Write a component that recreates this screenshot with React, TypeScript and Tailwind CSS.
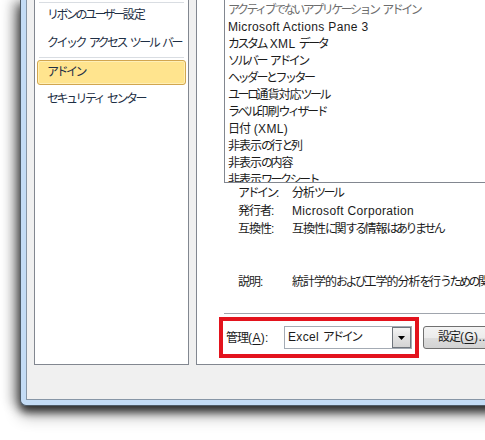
import React from 'react';

// Meiryo UI packs kana tighter than kanji; our CJK font is full width for both,
// so split text into runs and pull each run in by its own amount.
const RUN = /([\u3040-\u30ff]+)|([\u3000-\u303f\u3400-\u9fff\uff00-\uffef]+)|([^\u3000-\u9fff\uff00-\uffef]+)/g;

function T({ s }: { s: string }) {
  const runs: { text: string; cls: string }[] = [];
  for (const m of s.matchAll(RUN)) {
    if (m[1]) runs.push({ text: m[1], cls: 'tracking-[-2.5px]' });
    else if (m[2]) runs.push({ text: m[2], cls: 'tracking-[-1px]' });
    else runs.push({ text: m[3], cls: 'tracking-[0.35px]' });
  }
  return (
    <>
      {runs.map((r, i) => (
        <span key={i} className={r.cls}>
          {r.text}
        </span>
      ))}
    </>
  );
}

const navItems = ['リボンのユーザー設定', 'クイック アクセス ツール バー'];

const addins = [
  'Microsoft Actions Pane 3',
  'カスタム XML データ',
  'ソルバー アドイン',
  'ヘッダーとフッター',
  'ユーロ通貨対応ツール',
  'ラベル印刷ウィザード',
  '日付 (XML)',
  '非表示の行と列',
  '非表示の内容',
  '非表示ワークシート',
];

const details = [
  { label: 'アドイン:', value: '分析ツール' },
  { label: '発行者:', value: 'Microsoft Corporation' },
  { label: '互換性:', value: '互換性に関する情報はありません' },
];

export default function App() {
  return (
    <div className="w-[485px] h-[440px] bg-white overflow-hidden pl-[20px] text-[12px] font-[family-name:'Liberation_Sans','Noto_Sans_CJK_JP',sans-serif]">
      {/* Window frame */}
      <div className="h-[406px] w-[520px] rounded-bl-[6px] border-l border-b border-[#4f5c68] bg-[#c4dcf5] pl-[5px] pb-[5px] shadow-[0_6px_8px_rgba(0,0,0,0.7),0_10px_16px_rgba(0,0,0,0.3),-8px_0_12px_rgba(0,0,0,0.3)]">
        <div className="h-full flex gap-[7px] pl-[7px] pb-[34px] border-l border-b border-[#8796a6] bg-[#f0f0f0]">
          {/* Left navigation */}
          <div className="w-[155px] shrink-0 border-l border-r border-b border-[#828790] bg-white text-[#1e2f45]">
            <div className="mx-[4px] mt-[2px] h-px bg-[#d9dde2]" />
            {navItems.map((item, i) => (
              <div
                key={item}
                className={`h-[24px] leading-[24px] pl-[12px] whitespace-nowrap ${i > 0 ? 'mt-[4px]' : ''}`}
              >
                <T s={item} />
              </div>
            ))}
            <div className="mx-[4px] mt-[2px] h-px bg-[#d9dde2]" />
            <div className="mx-[2px] mt-[2px] h-[25px] leading-[23px] pl-[9px] rounded-[3px] border border-[#d2a64f] bg-[#ffe48e] shadow-[inset_0_0_0_1px_rgba(255,244,200,0.7)]">
              <T s="アドイン" />
            </div>
            <div className="mt-[2px] h-[24px] leading-[24px] pl-[12px] whitespace-nowrap">
              <T s="セキュリティ センター" />
            </div>
          </div>

          {/* Right panel */}
          <div className="flex-1 flex flex-col border-l border-b border-[#828790] bg-white text-[#1b1b1b]">
            {/* Add-in list */}
            <div className="ml-[27px] h-[183px] shrink-0 overflow-hidden border-l border-b border-[#828790] pt-[2px] pl-[3px]">
              <div className="h-[17px] leading-[17px] whitespace-nowrap text-[#6d6d6d]">
                <T s="アクティブでないアプリケーション アドイン" />
              </div>
              {addins.map((a) => (
                <div key={a} className="h-[17px] leading-[17px] whitespace-nowrap">
                  <T s={a} />
                </div>
              ))}
            </div>

            {/* Details */}
            <div className="mt-[1px] pl-[41px]">
              {details.map((d) => (
                <div key={d.label} className="flex h-[18px] leading-[18px] whitespace-nowrap">
                  <span className="w-[54px] shrink-0">
                    <T s={d.label} />
                  </span>
                  <span>
                    <T s={d.value} />
                  </span>
                </div>
              ))}
              <div className="mt-[35px] flex h-[18px] leading-[18px] whitespace-nowrap">
                <span className="w-[54px] shrink-0">
                  <T s="説明:" />
                </span>
                <span>
                  <T s="統計学的および工学的分析を行うための関数とツールを追加します。" />
                </span>
              </div>
            </div>

            <div className="ml-[27px] mt-[22px] h-px bg-[#a0a5ad]" />

            {/* Manage row */}
            <div className="mt-[3px] ml-[22px] flex items-center gap-[4px]">
              <div className="w-[200px] h-[41px] shrink-0 border-[4px] border-[#e3131d] flex items-center pl-[3px]">
                <span className="w-[58px] shrink-0 whitespace-nowrap">
                  <span className="tracking-[-1px]">管理</span>
                  <span className="tracking-[0.35px]">
                    (<span className="underline underline-offset-2">A</span>):
                  </span>
                </span>
                <div className="w-[128px] h-[23px] flex border border-[#a4abb4] bg-white">
                  <span className="flex-1 pl-[3px] leading-[21px] whitespace-nowrap">
                    <T s="Excel アドイン" />
                  </span>
                  <div className="w-[19px] h-full border border-[#6f757c] bg-[linear-gradient(#f4f4f4,#e2e2e2_50%,#d4d4d4)] flex items-center justify-center">
                    <svg width="7" height="4" viewBox="0 0 7 4">
                      <path d="M0 0h7L3.5 4z" fill="#000" />
                    </svg>
                  </div>
                </div>
              </div>
              <div className="w-[80px] h-[23px] shrink-0 rounded-[3px] border border-[#707070] bg-[linear-gradient(#f3f3f3,#ececec_50%,#dddddd_51%,#d3d3d3)] pl-[14px] leading-[21px] whitespace-nowrap">
                <span className="tracking-[-1px]">設定</span>
                <span className="tracking-[0.35px]">
                  (<span className="underline underline-offset-2">G</span>)...
                </span>
              </div>
            </div>
          </div>
        </div>
      </div>
    </div>
  );
}
